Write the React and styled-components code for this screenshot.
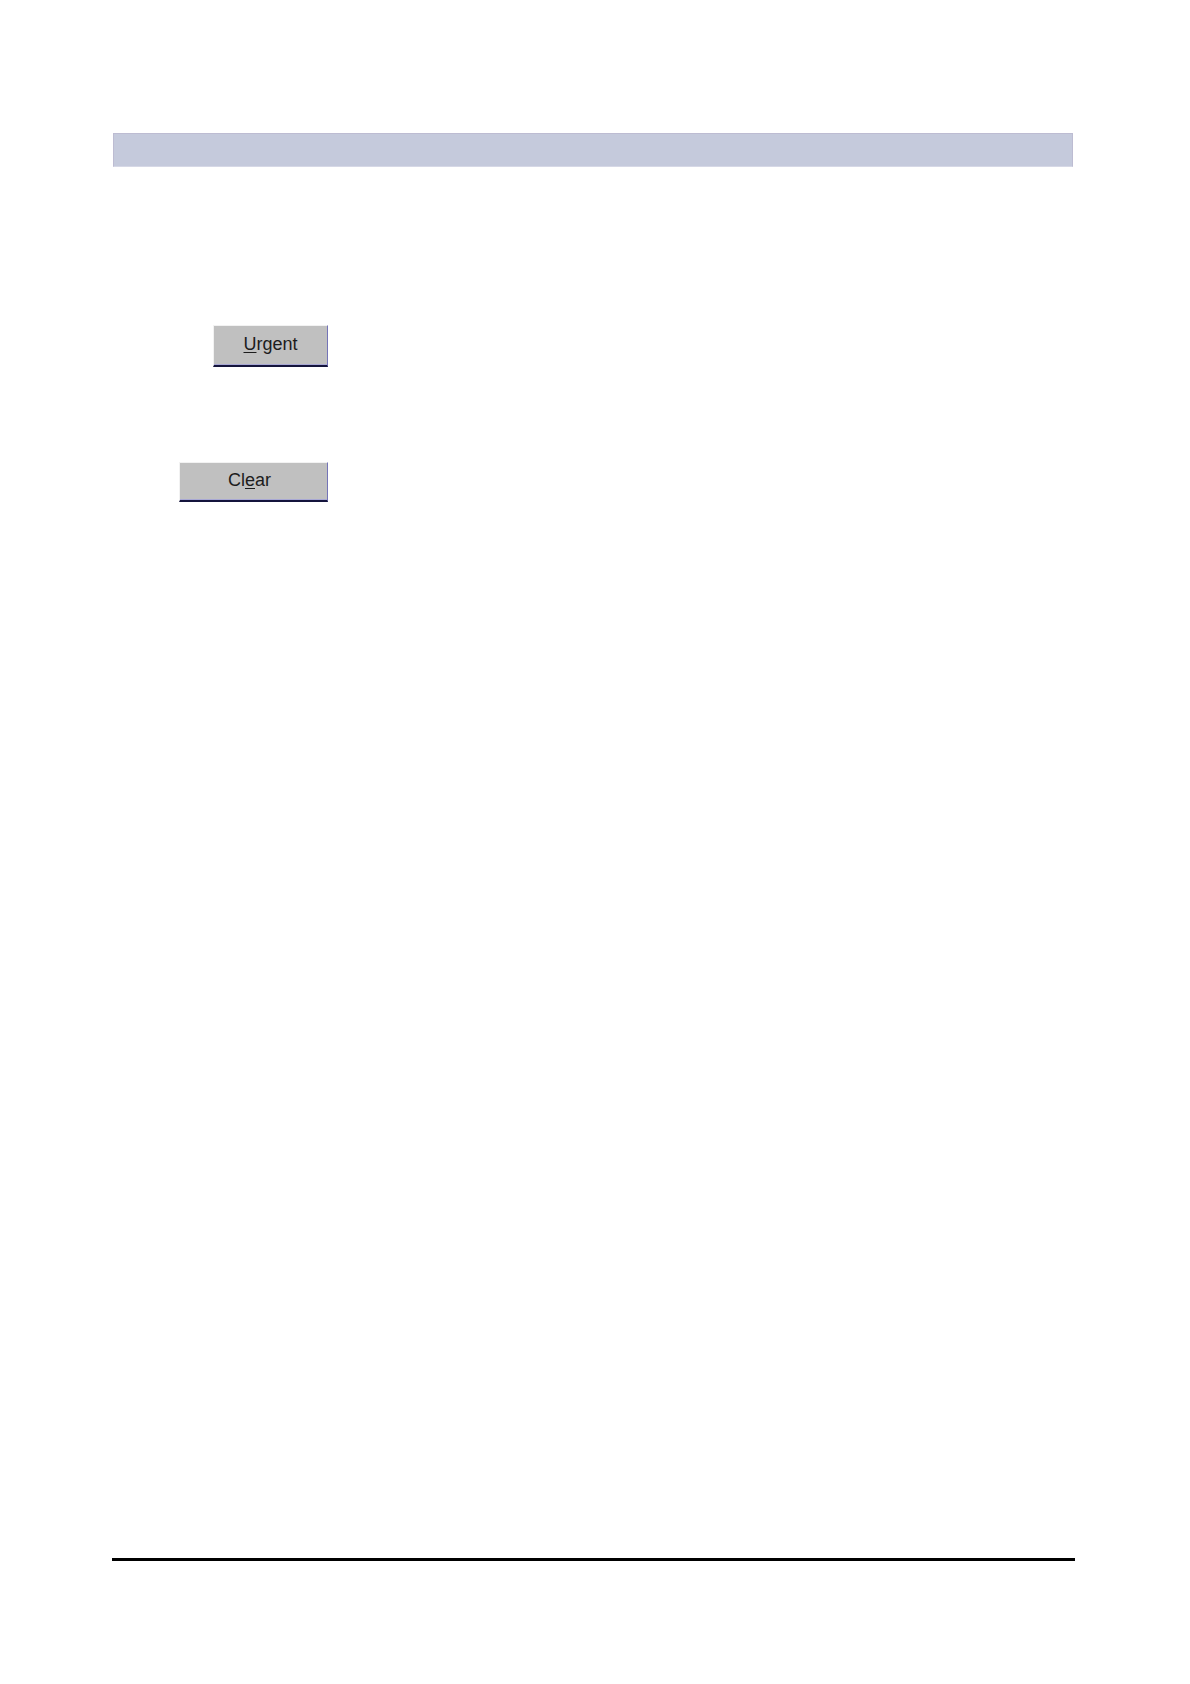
import React from 'react';
import styled, { createGlobalStyle } from 'styled-components';

const GlobalStyle = createGlobalStyle`
  html, body {
    margin: 0;
    padding: 0;
    background: #ffffff;
  }
  body {
    font-family: "Liberation Sans", Arial, sans-serif;
  }
`;

const Page = styled.div`
  width: 1190px;
  height: 1684px;
  box-sizing: border-box;
  padding: 133px 0 0 113px;
  display: flex;
  flex-direction: column;
`;

const TitleBar = styled.div`
  width: 960px;
  height: 34px;
  box-sizing: border-box;
  background: #c5cadc;
  border: 1px solid #bdbcd2;
  border-bottom-color: #d6d8e6;
`;

const Form = styled.div`
  display: flex;
  flex-direction: column;
  width: 215px;
  align-items: flex-end;
  margin-top: 158px;
  gap: 95px;
`;

const Button = styled.button`
  width: ${({ width }) => width}px;
  height: ${({ height }) => height}px;
  box-sizing: border-box;
  padding: 0 ${({ shift }) => (shift ? shift * 2 : 0)}px 2px 0;
  background: #c0c0c0;
  border-style: solid;
  border-width: 1px 1px 2px 1px;
  border-color: #f2f2f2 #7474b8 #14143c #f2f2f2;
  box-shadow: inset 0 -1px 0 #a8a8d4;
  font-family: "Liberation Sans", Arial, sans-serif;
  font-size: 18px;
  color: #1c1c1c;
  cursor: pointer;

  u {
    text-decoration-thickness: 1px;
    text-underline-offset: 2px;
  }
`;

const Spacer = styled.div`
  flex: 1;
`;

const FooterRule = styled.div`
  width: 963px;
  height: 3px;
  margin-left: -1px;
  margin-bottom: 123px;
  background: #000;
`;

export default function App() {
  return (
    <>
      <GlobalStyle />
      <Page>
        <TitleBar />
        <Form>
          <Button width={115} height={42}>
            <u>U</u>rgent
          </Button>
          <Button width={149} height={40} shift={4}>
            Cl<u>e</u>ar
          </Button>
        </Form>
        <Spacer />
        <FooterRule />
      </Page>
    </>
  );
}
